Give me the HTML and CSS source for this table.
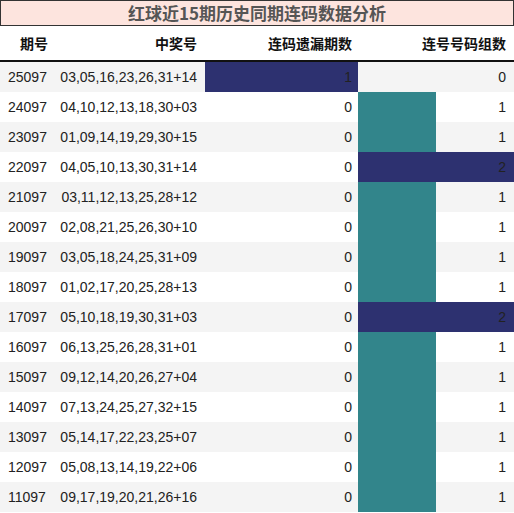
FILE: index.html
```html
<!DOCTYPE html>
<html lang="zh-CN">
<head>
  <meta charset="UTF-8">
  <title>红球近15期历史同期连码数据分析</title>
  <link rel="stylesheet" href="styles.css">
</head>
<body>

<div class="title">红球近15期历史同期连码数据分析</div>

<table id="lotteryTable">
  <colgroup>
    <col class="c-issue">
    <col class="c-nums">
    <col class="c-miss">
    <col class="c-groups">
  </colgroup>
  <thead>
    <tr>
      <th class="issue">期号</th>
      <th class="nums">中奖号</th>
      <th class="num">连码遗漏期数</th>
      <th class="num last">连号号码组数</th>
    </tr>
  </thead>
  <tbody id="tableBody">
    <!-- rows inserted via JS -->
  </tbody>
</table>

<script>
  const rows = [
    ["25097", "03,05,16,23,26,31+14", 1, 0],
    ["24097", "04,10,12,13,18,30+03", 0, 1],
    ["23097", "01,09,14,19,29,30+15", 0, 1],
    ["22097", "04,05,10,13,30,31+14", 0, 2],
    ["21097", "03,11,12,13,25,28+12", 0, 1],
    ["20097", "02,08,21,25,26,30+10", 0, 1],
    ["19097", "03,05,18,24,25,31+09", 0, 1],
    ["18097", "01,02,17,20,25,28+13", 0, 1],
    ["17097", "05,10,18,19,30,31+03", 0, 2],
    ["16097", "06,13,25,26,28,31+01", 0, 1],
    ["15097", "09,12,14,20,26,27+04", 0, 1],
    ["14097", "07,13,24,25,27,32+15", 0, 1],
    ["13097", "05,14,17,22,23,25+07", 0, 1],
    ["12097", "05,08,13,14,19,22+06", 0, 1],
    ["11097", "09,17,19,20,21,26+16", 0, 1]
  ];

  const maxMiss = Math.max(...rows.map(r => r[2]));
  const maxGroups = Math.max(...rows.map(r => r[3]));

  function barCell(val, max, extra) {
    if (!val) return `<td class="num ${extra}">${val}</td>`;
    const pct = (val / max * 100) + "%";
    const cls = val === max ? "bar-navy" : "bar-teal";
    return `<td class="num ${extra} ${cls}" style="--w:${pct}">${val}</td>`;
  }

  const tbody = document.getElementById("tableBody");
  rows.forEach(r => {
    const tr = document.createElement("tr");
    tr.innerHTML =
      `<td class="issue">${r[0]}</td>` +
      `<td class="nums">${r[1]}</td>` +
      barCell(r[2], maxMiss, "") +
      barCell(r[3], maxGroups, "last");
    tbody.appendChild(tr);
  });
</script>

</body>
</html>
```

FILE: styles.css
```css
body {
  margin: 0;
  background: #fff;
  font-family: "Liberation Sans", Arial, "Noto Sans CJK SC", sans-serif;
  color: #222;
}

.title {
  box-sizing: border-box;
  width: 514px;
  height: 26px;
  border: 1px solid #333;
  background: #fde4de;
  color: #555;
  font-family: "Noto Sans CJK SC", sans-serif;
  font-weight: bold;
  font-size: 17px;
  line-height: 23px;
  text-align: center;
}

table {
  border-collapse: collapse;
  table-layout: fixed;
  width: 514px;
}

.c-issue { width: 55px; }
.c-nums { width: 150px; }
.c-miss { width: 153px; }
.c-groups { width: 156px; }

th {
  height: 34px;
  padding: 0 6px 0 0;
  font-family: "Noto Sans CJK SC", sans-serif;
  font-size: 14px;
  font-weight: bold;
  color: #111;
  text-align: right;
  border-bottom: 2px solid #111;
}

th.issue {
  text-align: left;
  padding-left: 20px;
}

td {
  height: 30px;
  padding: 0 6px 0 0;
  font-size: 14px;
  white-space: nowrap;
  text-align: right;
}

th.nums, td.nums { padding-right: 8px; }
th.last, td.last { padding-right: 8px; }

td.issue {
  text-align: left;
  padding-left: 8px;
}

tbody tr:nth-child(odd) {
  background: #f4f4f4;
}

.bar-navy {
  background: linear-gradient(to right, #2d3170 var(--w), transparent var(--w));
}

.bar-teal {
  background: linear-gradient(to right, #32858b var(--w), transparent var(--w));
}
```
